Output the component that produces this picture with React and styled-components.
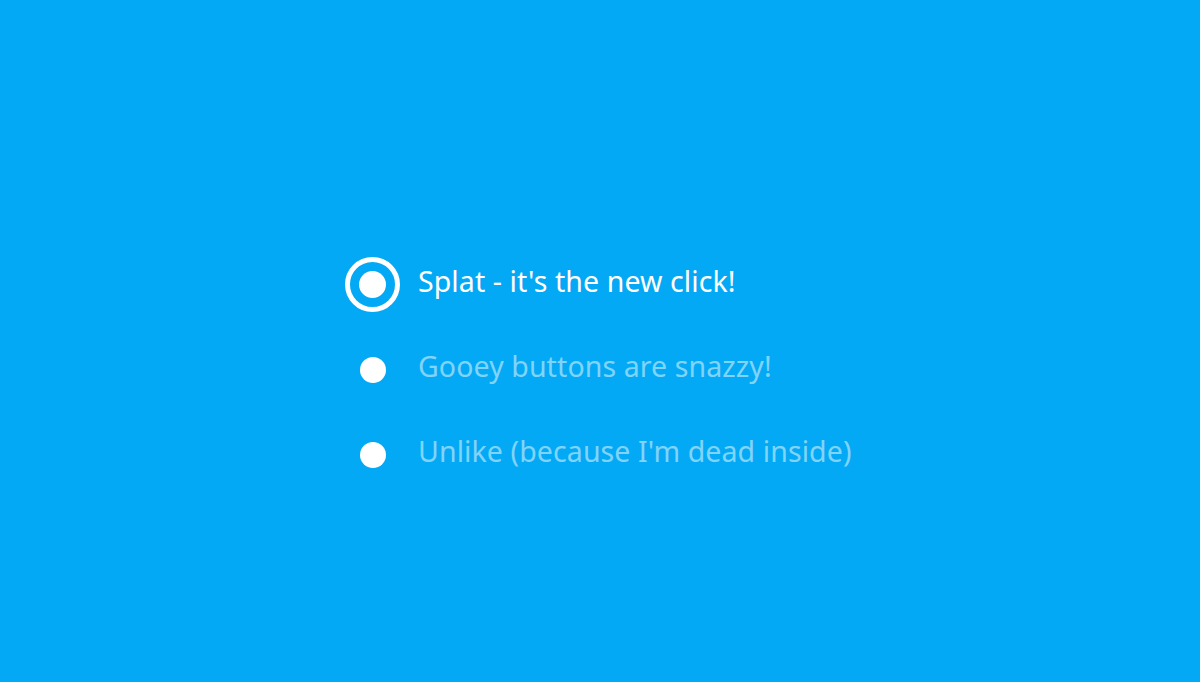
import React, { useState } from "react";
import styled, { createGlobalStyle } from "styled-components";

const GlobalStyle = createGlobalStyle`
  html, body {
    margin: 0;
    padding: 0;
    background: #03a9f4;
  }
`;

const Page = styled.main`
  display: flex;
  flex-direction: column;
  min-height: 682px;
  padding: 242px 0 0 345px;
  box-sizing: border-box;
  background: #03a9f4;
  font-family: "Noto Sans", "Open Sans", sans-serif;
`;

const Option = styled.label`
  display: flex;
  align-items: center;
  gap: 18px;
  height: 85px;
  cursor: pointer;
`;

const Radio = styled.span`
  display: flex;
  align-items: center;
  justify-content: center;
  width: 55px;
  height: 55px;
  flex-shrink: 0;
`;

const Ring = styled.span`
  display: flex;
  align-items: center;
  justify-content: center;
  width: ${(p) => (p.$on ? "55px" : "26px")};
  height: ${(p) => (p.$on ? "55px" : "26px")};
  box-sizing: border-box;
  border-radius: 50%;
  border: ${(p) => (p.$on ? "5px solid #fff" : "none")};
  background: ${(p) => (p.$on ? "transparent" : "#fff")};
`;

const Dot = styled.span`
  width: 27px;
  height: 27px;
  border-radius: 50%;
  background: #fff;
`;

const Label = styled.span`
  font-size: 28.5px;
  letter-spacing: 0.1px;
  color: ${(p) => (p.$on ? "#ffffff" : "rgba(255, 255, 255, 0.5)")};
  margin-top: -8px;
`;

const options = [
  "Splat - it's the new click!",
  "Gooey buttons are snazzy!",
  "Unlike (because I'm dead inside)",
];

export default function App() {
  const [selected, setSelected] = useState(0);
  return (
    <>
      <GlobalStyle />
      <Page>
        {options.map((text, i) => (
          <Option key={text} onClick={() => setSelected(i)}>
            <Radio>
              <Ring $on={selected === i}>{selected === i && <Dot />}</Ring>
            </Radio>
            <Label $on={selected === i}>{text}</Label>
          </Option>
        ))}
      </Page>
    </>
  );
}
